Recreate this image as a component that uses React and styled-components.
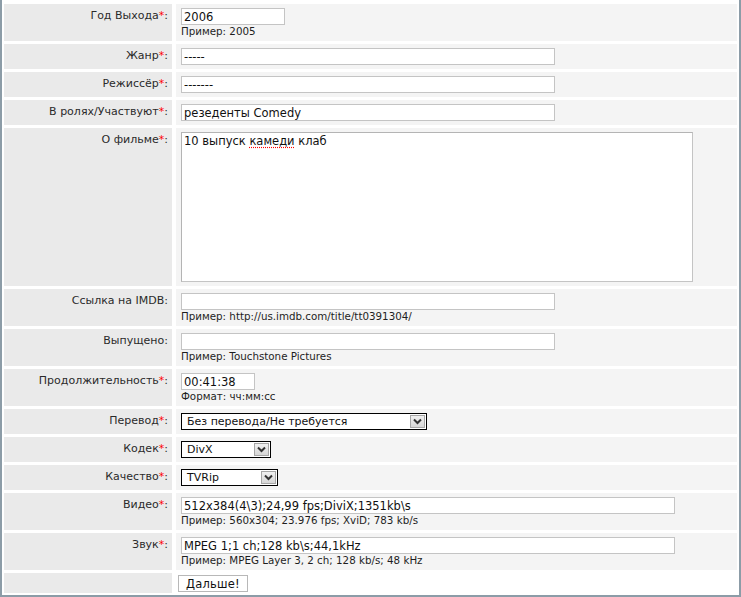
import React from "react";
import styled, { createGlobalStyle } from "styled-components";

const GlobalStyle = createGlobalStyle`
  html, body {
    margin: 0;
    padding: 0;
    background: #ffffff;
  }
  body {
    font-family: "DejaVu Sans", Verdana, sans-serif;
    color: #222;
  }
`;

const Frame = styled.div`
  box-sizing: border-box;
  width: 741px;
  height: 597px;
  border: 2px solid #8c9ca7;
  border-top: none;
  padding: 4px 2px 2px 2px;
  background: #fff;
  overflow: hidden;
`;

const FormGrid = styled.div`
  display: grid;
  grid-template-columns: 168px 1fr;
  column-gap: 4px;
  row-gap: 3px;
`;

const LabelCell = styled.div`
  background: #eaeaea;
  text-align: right;
  padding: 4px 4px 0 0;
  font-size: 11px;
  line-height: 15px;
  color: #2a2a2a;
`;

const Star = styled.span`
  color: #ff0000;
`;

const FieldCell = styled.div`
  background: ${(p) => (p.$plain ? "#ffffff" : "#f4f4f4")};
  padding: ${(p) => (p.$plain ? "2px 2px 1px" : "4px 5px 4px")};
  display: flex;
  flex-direction: column;
  align-items: flex-start;
`;

const TextInput = styled.input`
  box-sizing: border-box;
  width: ${(p) => p.$w}px;
  height: 17px;
  margin: 0;
  padding: 0 2px;
  border: 1px solid #c4c4c4;
  background: #fff;
  font-family: "DejaVu Sans", Verdana, sans-serif;
  font-size: 11.5px;
  color: #111;
  outline: none;
`;

const Hint = styled.div`
  margin-top: 1px;
  font-size: 10.3px;
  line-height: 11px;
  color: #1e1e1e;
`;

const TextBox = styled.div`
  box-sizing: border-box;
  width: 512px;
  height: 150px;
  padding: 1px 2px;
  border: 1px solid #c4c4c4;
  border-top-color: #b4b4b4;
  border-left-color: #b4b4b4;
  background: #fff;
  font-size: 11.5px;
  line-height: 15px;
  color: #111;
`;

const Misspelled = styled.span`
  text-decoration: underline dotted #ff0000;
  text-underline-offset: 2px;
`;

const SelectWrap = styled.div`
  box-sizing: border-box;
  width: ${(p) => p.$w}px;
  height: 17px;
  border: 1px solid #000;
  background: #fff;
  display: flex;
  align-items: center;
  padding: 0 1px;
`;

const SelectText = styled.div`
  flex: 1;
  padding-left: 4px;
  font-size: 11px;
  line-height: 14px;
  color: #111;
  white-space: nowrap;
  overflow: hidden;
`;

const ArrowBox = styled.div`
  box-sizing: border-box;
  width: 15px;
  height: 13px;
  border: 1px solid #a6a6a6;
  background: linear-gradient(#f0f0f0, #d6d6d6);
  display: flex;
  align-items: center;
  justify-content: center;
`;

const Button = styled.button`
  box-sizing: border-box;
  height: 17px;
  padding: 0 7px;
  margin: 0;
  border: 1px solid #b8b8b8;
  background: #fff;
  font-family: "DejaVu Sans", Verdana, sans-serif;
  font-size: 11.5px;
  line-height: 14px;
  color: #111;
  letter-spacing: 0.2px;
`;

function Chevron() {
  return (
    <svg width="9" height="7" viewBox="0 0 9 7">
      <path d="M1 1.5 L4.5 5 L8 1.5" fill="none" stroke="#333" strokeWidth="2" />
    </svg>
  );
}

function Label({ text, required }) {
  return (
    <LabelCell>
      {text}
      {required && <Star>*</Star>}:
    </LabelCell>
  );
}

function Select({ value, width }) {
  return (
    <SelectWrap $w={width}>
      <SelectText>{value}</SelectText>
      <ArrowBox>
        <Chevron />
      </ArrowBox>
    </SelectWrap>
  );
}

const fields = [
  { label: "Год Выхода", req: true, value: "2006", width: 104, hint: "Пример: 2005" },
  { label: "Жанр", req: true, value: "-----", width: 374 },
  { label: "Режиссёр", req: true, value: "-------", width: 374 },
  { label: "В ролях/Участвуют", req: true, value: "резеденты Comedy", width: 374 },
  { label: "О фильме", req: true, type: "text" },
  { label: "Ссылка на IMDB", value: "", width: 374, hint: "Пример: http://us.imdb.com/title/tt0391304/" },
  { label: "Выпущено", value: "", width: 374, hint: "Пример: Touchstone Pictures" },
  { label: "Продолжительность", req: true, value: "00:41:38", width: 74, hint: "Формат: чч:мм:сс" },
  { label: "Перевод", req: true, type: "select", value: "Без перевода/Не требуется", width: 246 },
  { label: "Кодек", req: true, type: "select", value: "DivX", width: 90 },
  { label: "Качество", req: true, type: "select", value: "TVRip", width: 97 },
  { label: "Видео", req: true, value: "512x384(4\\3);24,99 fps;DiviX;1351kb\\s", width: 494, hint: "Пример: 560x304; 23.976 fps; XviD; 783 kb/s" },
  { label: "Звук", req: true, value: "MPEG 1;1 ch;128 kb\\s;44,1kHz", width: 494, hint: "Пример: MPEG Layer 3, 2 ch; 128 kb/s; 48 kHz" },
];

function Field({ f }) {
  if (f.type === "text") {
    return (
      <FieldCell>
        <TextBox>
          10 выпуск <Misspelled>камеди</Misspelled> клаб
        </TextBox>
      </FieldCell>
    );
  }
  if (f.type === "select") {
    return (
      <FieldCell>
        <Select value={f.value} width={f.width} />
      </FieldCell>
    );
  }
  return (
    <FieldCell>
      <TextInput $w={f.width} defaultValue={f.value} />
      {f.hint && <Hint>{f.hint}</Hint>}
    </FieldCell>
  );
}

export default function App() {
  return (
    <>
      <GlobalStyle />
      <Frame>
        <FormGrid>
          {fields.map((f) => (
            <React.Fragment key={f.label}>
              <Label text={f.label} required={f.req} />
              <Field f={f} />
            </React.Fragment>
          ))}
          <LabelCell />
          <FieldCell $plain>
            <Button type="button">Дальше!</Button>
          </FieldCell>
        </FormGrid>
      </Frame>
    </>
  );
}
